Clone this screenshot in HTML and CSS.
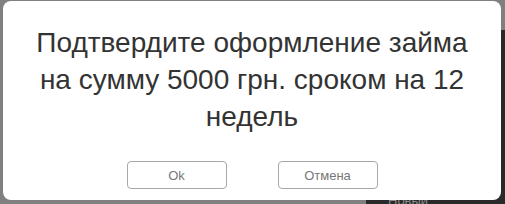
FILE: index.html
```html
<!DOCTYPE html>
<html lang="ru">
<head>
<meta charset="utf-8">
<title>Подтверждение</title>
<link rel="stylesheet" href="styles.css">
</head>
<body>
<div class="page">
  <div class="side-panel"><span class="side-text">Новый</span></div>
</div>
<div class="overlay">
  <div class="dialog">
    <p class="message">Подтвердите оформление займа на сумму 5000 грн. сроком на 12 недель</p>
    <div class="actions">
      <button class="btn">Ok</button>
      <button class="btn">Отмена</button>
    </div>
  </div>
</div>
</body>
</html>
```
FILE: styles.css
```css
html, body {
  margin: 0;
  padding: 0;
  width: 505px;
  height: 204px;
  overflow: hidden;
}
body {
  background: #808080;
  font-family: "Liberation Sans", Arial, sans-serif;
  position: relative;
}
.page {
  width: 505px;
  height: 204px;
}
.side-panel {
  position: absolute;
  left: 366px;
  top: 30px;
  right: 0;
  bottom: 0;
  background: #2a2a2a;
}
.side-text {
  position: absolute;
  left: 22px;
  top: 163px;
  color: #8a8a8a;
  font-size: 13px;
}
.overlay {
  position: absolute;
  inset: 0;
  padding: 1px 4px 4px 3px;
  box-sizing: border-box;
}
.dialog {
  background: #ffffff;
  border-radius: 8px;
  height: 199px;
  box-sizing: border-box;
  padding: 23px 16px 0;
  display: flex;
  flex-direction: column;
  align-items: center;
}
.message {
  margin: 0;
  font-size: 28px;
  line-height: 37px;
  color: #333333;
  text-align: center;
  max-width: 450px;
}
.actions {
  margin-top: 26px;
  display: flex;
  gap: 51px;
}
.btn {
  width: 100px;
  height: 28px;
  background: #ffffff;
  border: 1px solid #a8a8a8;
  border-radius: 4px;
  font-family: "Liberation Sans", Arial, sans-serif;
  font-size: 13px;
  color: #777777;
  padding: 0;
}
```
